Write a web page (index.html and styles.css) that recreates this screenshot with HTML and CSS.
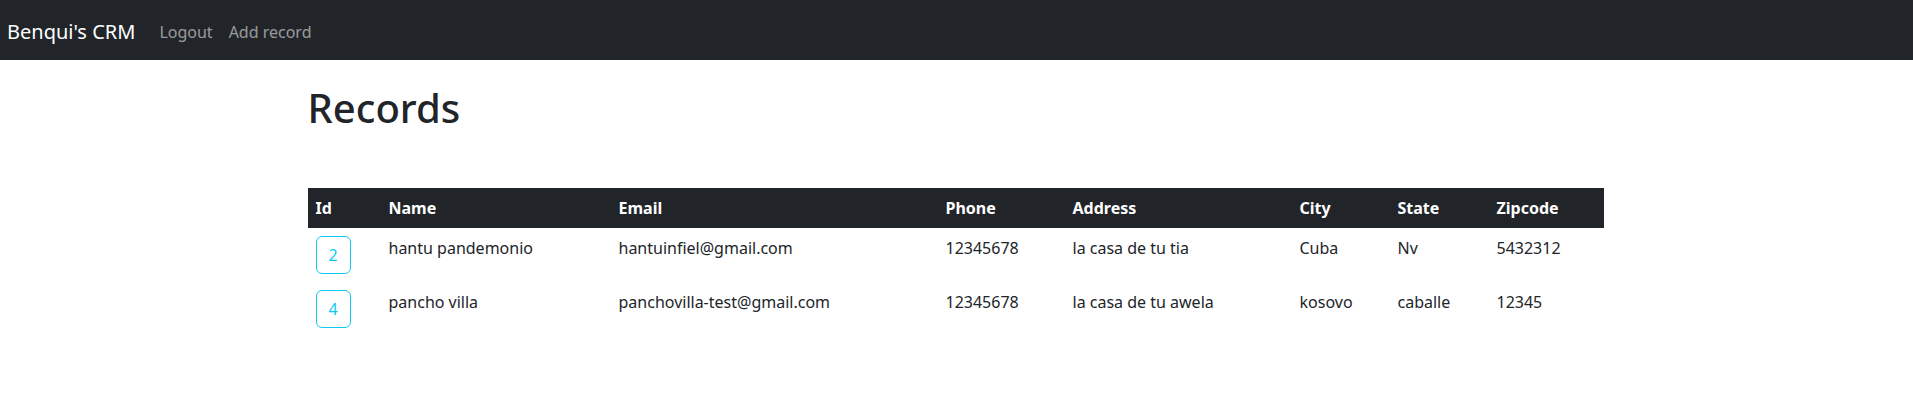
FILE: index.html
```html
<!DOCTYPE html>
<html lang="en">
<head>
<meta charset="utf-8">
<title>Benqui's CRM</title>
<link rel="stylesheet" href="styles.css">
</head>
<body>
<nav class="navbar">
  <a class="brand" href="#">Benqui's CRM</a>
  <ul class="nav-links">
    <li><a class="nav-link" href="#">Logout</a></li>
    <li><a class="nav-link" href="#">Add record</a></li>
  </ul>
</nav>
<main class="container">
  <h1 class="title">Records</h1>
  <table class="records">
    <colgroup>
      <col class="c-id"><col class="c-name"><col class="c-email"><col class="c-phone"><col class="c-address"><col class="c-city"><col class="c-state"><col class="c-zip">
    </colgroup>
    <thead>
      <tr>
        <th>Id</th><th>Name</th><th>Email</th><th>Phone</th><th>Address</th><th>City</th><th>State</th><th>Zipcode</th>
      </tr>
    </thead>
    <tbody>
      <tr>
        <td><a class="btn-id" href="#">2</a></td>
        <td>hantu pandemonio</td>
        <td>hantuinfiel@gmail.com</td>
        <td>12345678</td>
        <td>la casa de tu tia</td>
        <td>Cuba</td>
        <td>Nv</td>
        <td>5432312</td>
      </tr>
      <tr>
        <td><a class="btn-id" href="#">4</a></td>
        <td>pancho villa</td>
        <td>panchovilla-test@gmail.com</td>
        <td>12345678</td>
        <td>la casa de tu awela</td>
        <td>kosovo</td>
        <td>caballe</td>
        <td>12345</td>
      </tr>
    </tbody>
  </table>
</main>
</body>
</html>
```
FILE: styles.css
```css
* { box-sizing: border-box; }

body {
  margin: 0;
  font-family: "Noto Sans", "Open Sans", sans-serif;
  font-size: 16px;
  line-height: 1.5;
  color: #212529;
  background: #fff;
}

a { text-decoration: none; }

.navbar {
  display: flex;
  align-items: center;
  height: 60px;
  padding: 3px 0 0 7px;
  background: #212529;
}

.brand {
  font-size: 20px;
  line-height: 30px;
  color: #fff;
  margin-right: 16px;
}

.nav-links {
  display: flex;
  list-style: none;
  margin: 0;
  padding: 0;
}

.nav-link {
  display: block;
  padding: 0 8px;
  line-height: 24px;
  color: rgba(255, 255, 255, 0.55);
}

.container {
  width: 1296px;
  margin: 24px auto 0;
  position: relative;
  left: -1px;
}

.title {
  margin: 0 0 56px;
  font-size: 40px;
  font-weight: 500;
  line-height: 1.2;
}

.records {
  width: 1296px;
  border-collapse: collapse;
  table-layout: fixed;
}

.c-id { width: 73px; }
.c-name { width: 230px; }
.c-email { width: 327px; }
.c-phone { width: 127px; }
.c-address { width: 227px; }
.c-city { width: 98px; }
.c-state { width: 99px; }
.c-zip { width: 115px; }

.records th {
  background: #212529;
  color: #fff;
  font-weight: 700;
  text-align: left;
  padding: 8px;
  line-height: 24px;
}

.records td {
  padding: 8px;
  vertical-align: top;
  line-height: 24px;
}

.btn-id {
  display: inline-block;
  padding: 6px 12px;
  border: 1px solid #0dcaf0;
  border-radius: 6px;
  color: #0dcaf0;
  line-height: 24px;
}
```
